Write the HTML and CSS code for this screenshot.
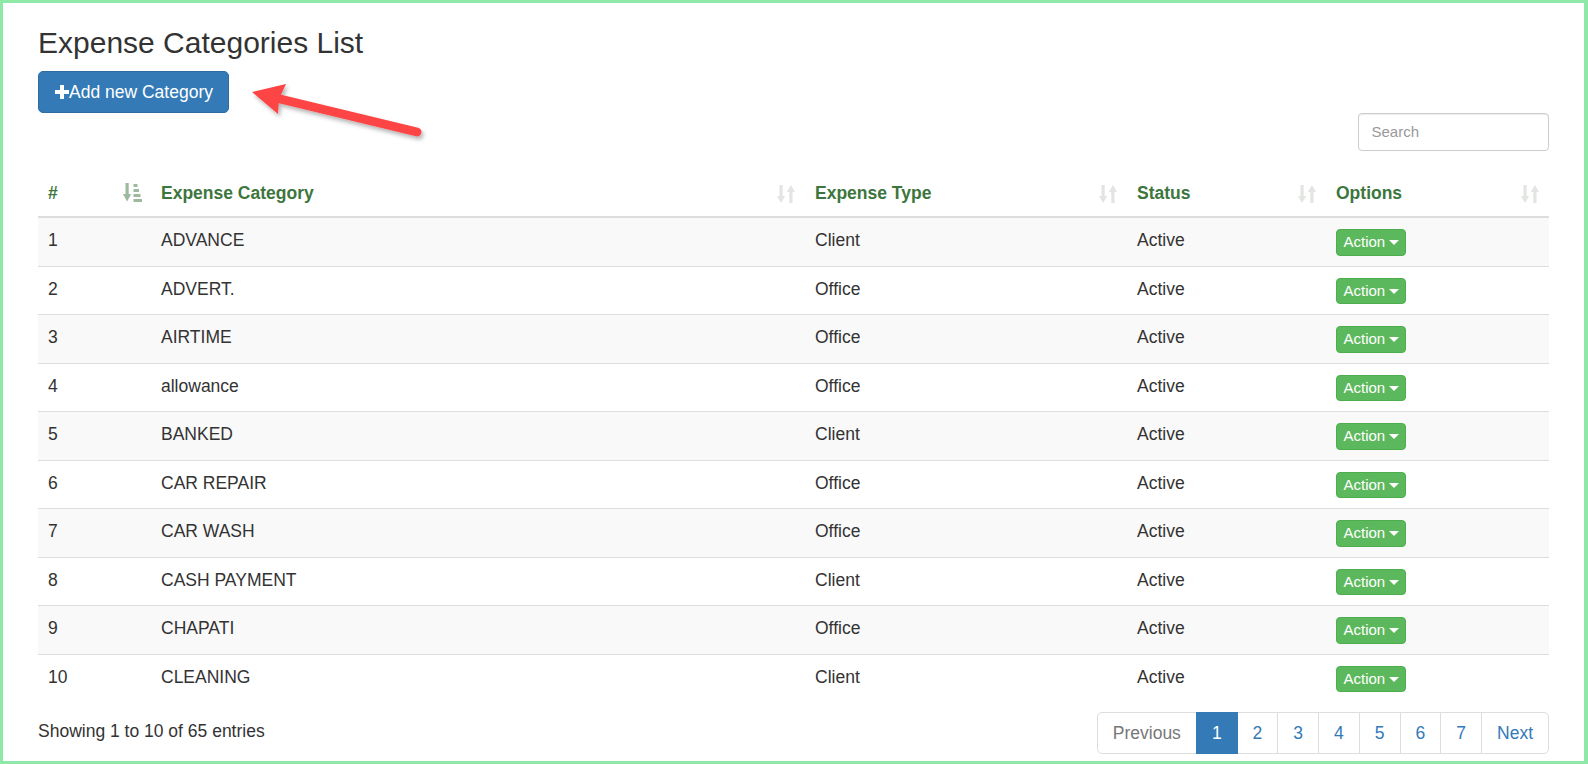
FILE: index.html
```html
<!DOCTYPE html>
<html lang="en">
<head>
<meta charset="utf-8">
<title>Expense Categories List</title>
<link rel="stylesheet" href="styles.css">
</head>
<body>
<div class="frame">
  <div class="page">
    <h3 class="title">Expense Categories List</h3>
    <div class="add-row">
      <button class="btn-add" type="button"><svg class="plus" width="14" height="14" viewBox="0 0 14 14"><path d="M5 0h4v5h5v4H9v5H5V9H0V5h5z" fill="#fff"/></svg>Add new Category</button>
    </div>
    <div class="filter-row">
      <input class="search" type="search" placeholder="Search">
    </div>
    <table class="grid">
      <colgroup>
        <col class="c1"><col class="c2"><col class="c3"><col class="c4"><col class="c5">
      </colgroup>
      <thead>
        <tr>
          <th>#<svg class="sort-ic sorted" width="19" height="19" viewBox="0 0 19 19"><rect x="2.5" y="0" width="3.2" height="12"/><polygon points="0,11 8.2,11 4.1,18.5"/><rect x="10.5" y="1" width="4" height="3"/><rect x="10.5" y="6" width="5.5" height="3"/><rect x="10.5" y="11" width="7" height="3"/><rect x="10.5" y="16" width="8.5" height="3"/></svg></th>
          <th>Expense Category<svg class="sort-ic" width="18" height="18" viewBox="0 0 18 18"><rect x="2.5" y="0" width="3.2" height="12"/><polygon points="0,11 8.2,11 4.1,18"/><polygon points="9.8,7 18,7 13.9,0"/><rect x="12.3" y="6" width="3.2" height="12"/></svg></th>
          <th>Expense Type<svg class="sort-ic" width="18" height="18" viewBox="0 0 18 18"><rect x="2.5" y="0" width="3.2" height="12"/><polygon points="0,11 8.2,11 4.1,18"/><polygon points="9.8,7 18,7 13.9,0"/><rect x="12.3" y="6" width="3.2" height="12"/></svg></th>
          <th>Status<svg class="sort-ic" width="18" height="18" viewBox="0 0 18 18"><rect x="2.5" y="0" width="3.2" height="12"/><polygon points="0,11 8.2,11 4.1,18"/><polygon points="9.8,7 18,7 13.9,0"/><rect x="12.3" y="6" width="3.2" height="12"/></svg></th>
          <th>Options<svg class="sort-ic" width="18" height="18" viewBox="0 0 18 18"><rect x="2.5" y="0" width="3.2" height="12"/><polygon points="0,11 8.2,11 4.1,18"/><polygon points="9.8,7 18,7 13.9,0"/><rect x="12.3" y="6" width="3.2" height="12"/></svg></th>
        </tr>
      </thead>
      <tbody>
        <tr><td>1</td><td>ADVANCE</td><td>Client</td><td>Active</td><td><button class="btn-action" type="button">Action<span class="caret"></span></button></td></tr>
        <tr><td>2</td><td>ADVERT.</td><td>Office</td><td>Active</td><td><button class="btn-action" type="button">Action<span class="caret"></span></button></td></tr>
        <tr><td>3</td><td>AIRTIME</td><td>Office</td><td>Active</td><td><button class="btn-action" type="button">Action<span class="caret"></span></button></td></tr>
        <tr><td>4</td><td>allowance</td><td>Office</td><td>Active</td><td><button class="btn-action" type="button">Action<span class="caret"></span></button></td></tr>
        <tr><td>5</td><td>BANKED</td><td>Client</td><td>Active</td><td><button class="btn-action" type="button">Action<span class="caret"></span></button></td></tr>
        <tr><td>6</td><td>CAR REPAIR</td><td>Office</td><td>Active</td><td><button class="btn-action" type="button">Action<span class="caret"></span></button></td></tr>
        <tr><td>7</td><td>CAR WASH</td><td>Office</td><td>Active</td><td><button class="btn-action" type="button">Action<span class="caret"></span></button></td></tr>
        <tr><td>8</td><td>CASH PAYMENT</td><td>Client</td><td>Active</td><td><button class="btn-action" type="button">Action<span class="caret"></span></button></td></tr>
        <tr><td>9</td><td>CHAPATI</td><td>Office</td><td>Active</td><td><button class="btn-action" type="button">Action<span class="caret"></span></button></td></tr>
        <tr><td>10</td><td>CLEANING</td><td>Client</td><td>Active</td><td><button class="btn-action" type="button">Action<span class="caret"></span></button></td></tr>
      </tbody>
    </table>
    <div class="footer-row">
      <div class="info">Showing 1 to 10 of 65 entries</div>
      <ul class="pagination">
        <li class="disabled"><a>Previous</a></li>
        <li class="active"><a>1</a></li>
        <li><a>2</a></li>
        <li><a>3</a></li>
        <li><a>4</a></li>
        <li><a>5</a></li>
        <li><a>6</a></li>
        <li><a>7</a></li>
        <li><a>Next</a></li>
      </ul>
    </div>
  </div>
  <svg class="arrow" width="200" height="80" viewBox="240 70 200 80">
    <defs>
      <filter id="sh" x="-20%" y="-40%" width="140%" height="180%">
        <feDropShadow dx="2" dy="3" stdDeviation="2" flood-color="#000" flood-opacity="0.3"/>
      </filter>
    </defs>
    <g filter="url(#sh)">
      <line x1="276" y1="98" x2="417" y2="132" stroke="#fd4444" stroke-width="9" stroke-linecap="round"/>
      <polygon points="252,92 286,84 279,99 278,114" fill="#fd4444"/>
    </g>
  </svg>
</div>
</body>
</html>
```

FILE: styles.css
```css
html, body {
  margin: 0;
  padding: 0;
  background: #fff;
}

body {
  font-family: "Liberation Sans", Arial, Helvetica, sans-serif;
  font-size: 17.5px;
  line-height: 25px;
  color: #333;
}

.frame {
  position: relative;
  box-sizing: border-box;
  width: 1588px;
  height: 764px;
  border: 3px solid #8ee9a9;
  border-right-width: 4px;
  padding: 22.6px 35px 0 35px;
  overflow: hidden;
}

.page {
  display: flex;
  flex-direction: column;
}

.title {
  margin: 0 0 12.5px;
  font-size: 30px;
  line-height: 33px;
  font-weight: 400;
  color: #333;
}

.add-row {
  display: flex;
}

.btn-add {
  display: inline-flex;
  align-items: center;
  box-sizing: border-box;
  height: 42px;
  padding: 0 15px 0 15.5px;
  font-family: inherit;
  font-size: 17.5px;
  line-height: 25px;
  color: #fff;
  background: #337ab7;
  border: 1px solid #2e6da4;
  border-radius: 5px;
  cursor: pointer;
}

.plus {
  margin-right: 0.5px;
}

.filter-row {
  display: flex;
  justify-content: flex-end;
  margin-bottom: 20px;
}

.search {
  box-sizing: border-box;
  width: 191px;
  height: 38px;
  padding: 0 12.5px 2px;
  font-family: inherit;
  font-size: 15px;
  color: #555;
  border: 1px solid #ccc;
  border-radius: 4px;
  box-shadow: inset 0 1px 1px rgba(0, 0, 0, 0.075);
  outline: none;
}

.search::placeholder {
  color: #999;
}

.grid {
  width: 1511px;
  table-layout: fixed;
  border-collapse: collapse;
  border-spacing: 0;
}

.c1 { width: 113px; }
.c2 { width: 654px; }
.c3 { width: 322px; }
.c4 { width: 199px; }
.c5 { width: 223px; }

.grid th {
  position: relative;
  padding: 10px 37px 10px 10px;
  text-align: left;
  vertical-align: bottom;
  font-weight: 700;
  color: #3c763d;
  line-height: 25px;
  border-bottom: 2px solid #ddd;
}

.sort-ic {
  position: absolute;
  right: 10px;
  bottom: 13px;
  fill: #e2e5e2;
}

.sort-ic.sorted {
  right: 9px;
  bottom: 14px;
  fill: #9dba9e;
}

.grid td {
  padding: 10px;
  vertical-align: top;
  line-height: 25px;
  border-top: 1px solid #ddd;
  white-space: nowrap;
}

.grid tbody tr:nth-child(odd) td {
  background: #f9f9f9;
}

.btn-action {
  display: inline-flex;
  align-items: center;
  vertical-align: top;
  box-sizing: border-box;
  height: 26.5px;
  margin-top: 1px;
  padding: 0 6px 0 6.5px;
  font-family: inherit;
  font-size: 15px;
  line-height: 20px;
  color: #fff;
  background: #5cb85c;
  border: 1px solid #4cae4c;
  border-radius: 4px;
  cursor: pointer;
}

.caret {
  display: inline-block;
  width: 0;
  height: 0;
  margin-left: 4px;
  margin-top: 1px;
  border-top: 5px solid #fff;
  border-left: 5px solid transparent;
  border-right: 5px solid transparent;
}

.footer-row {
  display: flex;
  justify-content: space-between;
  align-items: flex-start;
  margin-top: 10px;
}

.info {
  padding-top: 7.4px;
  line-height: 25px;
}

.pagination {
  display: flex;
  margin: 0;
  padding: 0;
  list-style: none;
}

.pagination li a {
  display: block;
  padding: 7.5px 15px;
  margin-left: -1px;
  line-height: 25px;
  color: #337ab7;
  background: #fff;
  border: 1px solid #ddd;
  cursor: pointer;
}

.pagination li:first-child a {
  margin-left: 0;
  border-radius: 5px 0 0 5px;
}

.pagination li:last-child a {
  border-radius: 0 5px 5px 0;
}

.pagination li.disabled a {
  color: #777;
}

.pagination li.active a {
  position: relative;
  color: #fff;
  background: #337ab7;
  border-color: #337ab7;
}

.arrow {
  position: absolute;
  left: 237px;
  top: 67px;
  overflow: visible;
  pointer-events: none;
}
```
